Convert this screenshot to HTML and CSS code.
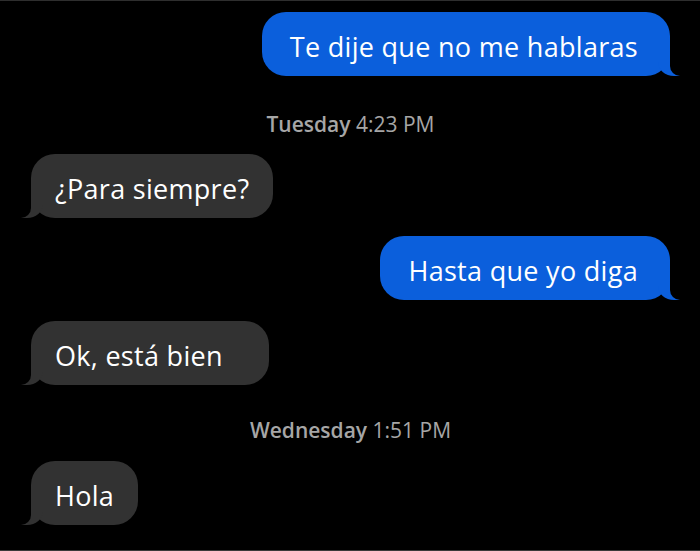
FILE: index.html
```html
<!DOCTYPE html>
<html lang="es">
<head>
    <meta charset="UTF-8">
    <meta name="viewport" content="width=device-width, initial-scale=1.0">
    <title>Mensajes</title>
    <link rel="stylesheet" href="styles.css">
</head>
<body>
    <div class="thread">
        <div class="msg sent">Te dije que no me hablaras</div>
        <div class="stamp stamp-first"><b>Tuesday</b> 4:23 PM</div>
        <div class="msg received">¿Para siempre?</div>
        <div class="msg sent reply">Hasta que yo diga</div>
        <div class="msg received reply roomy">Ok, está bien</div>
        <div class="stamp stamp-second"><b>Wednesday</b> 1:51 PM</div>
        <div class="msg received">Hola</div>
    </div>
</body>
</html>
```

FILE: styles.css
```css
/* Basic reset */
html, body {
    margin: 0;
    padding: 0;
    background-color: #000000;
}

body {
    height: 551px;
    box-sizing: border-box;
    border-top: 1px solid #2e2e2e;
    border-bottom: 1px solid #3a3a3a;
    overflow: hidden;
    font-family: 'Open Sans', 'Lato', sans-serif;
    color: #ffffff;
}

/* Conversation column */
.thread {
    display: flex;
    flex-direction: column;
    padding: 11px 30px 0 31px;
}

/* Message bubbles */
.msg {
    position: relative;
    font-size: 27px;
    letter-spacing: 0.3px;
    line-height: 34px;
    padding: 18px 24px 12px;
    border-radius: 24px;
}

.msg.reply {
    margin-top: 18px;
}

.msg.received.reply {
    margin-top: 21px;
}

.msg.roomy {
    padding-right: 46px;
}

.sent {
    align-self: flex-end;
    background-color: #0b5fdc;
    padding-left: 28px;
    padding-right: 32px;
}

.received {
    align-self: flex-start;
    background-color: #323232;
}

/* Bubble tails */
.msg::before,
.msg::after {
    content: "";
    position: absolute;
    bottom: 0;
    height: 25px;
}

.sent::before {
    right: -10px;
    width: 22px;
    background-color: #0b5fdc;
    border-bottom-left-radius: 16px 14px;
}

.sent::after {
    right: -26px;
    width: 26px;
    background-color: #000000;
    border-bottom-left-radius: 10px;
}

.received::before {
    left: -10px;
    width: 22px;
    background-color: #323232;
    border-bottom-right-radius: 16px 14px;
}

.received::after {
    left: -26px;
    width: 26px;
    background-color: #000000;
    border-bottom-right-radius: 10px;
}

/* Timestamps */
.stamp {
    align-self: center;
    font-size: 21px;
    line-height: 24px;
    color: #a6a6a6;
}

.stamp b {
    font-weight: 600;
}

.stamp-first {
    margin-top: 36px;
    margin-bottom: 18px;
}

.stamp-second {
    margin-top: 33px;
    margin-bottom: 19px;
}
```
